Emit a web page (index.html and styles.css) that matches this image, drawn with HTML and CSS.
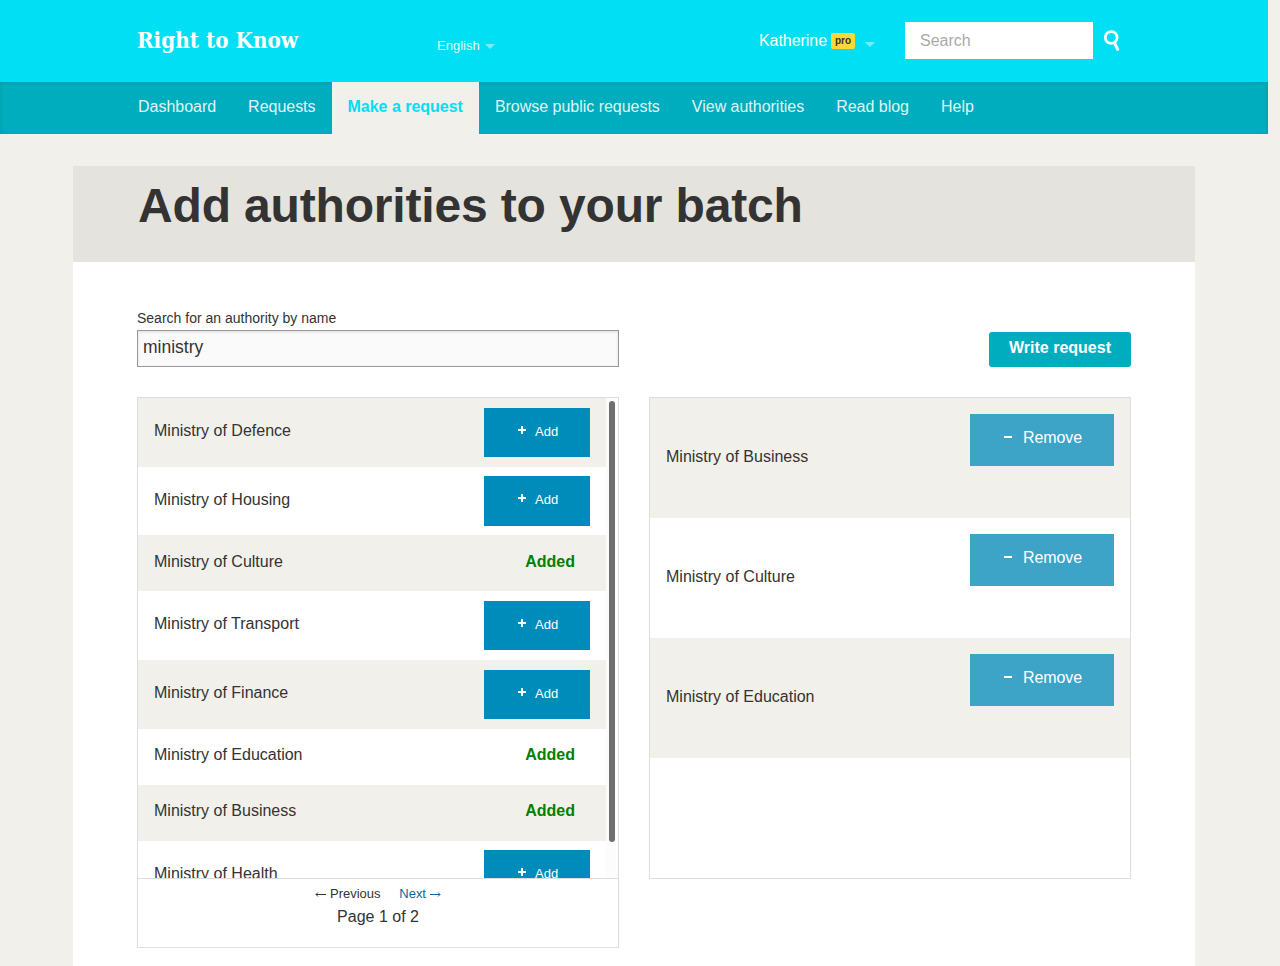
FILE: index.html
```html
<!DOCTYPE html>
<html lang="en">
<head>
<meta charset="utf-8">
<title>Add authorities to your batch - Right to Know</title>
<link rel="stylesheet" href="styles.css">
</head>
<body>
<header class="header">
  <a class="logo"><svg class="logo-art" width="170" height="40" viewBox="0 0 170 40"><text class="logo-text" x="1" y="24" textLength="161" lengthAdjust="spacingAndGlyphs">Right to Know</text></svg></a>
  <a class="locale">English <svg class="caret" width="10" height="5" viewBox="0 0 10 5"><path d="M0 0h10L5 5z"/></svg></a>
  <a class="account"><span class="account-name">Katherine</span><span class="pro">pro</span><svg class="caret" width="10" height="5" viewBox="0 0 10 5"><path d="M0 0h10L5 5z"/></svg></a>
  <form class="site-search">
    <input class="site-search-input" type="text" placeholder="Search" aria-label="Search">
    <svg class="search-icon" width="18" height="22" viewBox="0 0 18 22"><circle cx="7.2" cy="7.5" r="5.9"/><path d="M10.400 13L13.600 19.300"/></svg>
  </form>
</header>
<nav class="nav">
  <a class="nav-item">Dashboard</a>
  <a class="nav-item">Requests</a>
  <a class="nav-item nav-active">Make a request</a>
  <a class="nav-item">Browse public requests</a>
  <a class="nav-item">View authorities</a>
  <a class="nav-item">Read blog</a>
  <a class="nav-item">Help</a>
</nav>
<main class="page">
  <div class="title-bar"><h1 class="title">Add authorities to your batch</h1></div>
  <div class="tools">
    <div class="finder">
      <label class="finder-label" for="q">Search for an authority by name</label>
      <input class="finder-input" id="q" type="text" value="ministry">
    </div>
    <button class="write">Write request</button>
  </div>
  <div class="columns">
    <section class="left">
      <div class="results">
        <ul class="list">
          <li class="row"><span>Ministry of Defence</span><button class="add"><svg class="sign" width="8" height="8"><path d="M0 4h8M4 0v8"/></svg>Add</button></li>
          <li class="row"><span>Ministry of Housing</span><button class="add"><svg class="sign" width="8" height="8"><path d="M0 4h8M4 0v8"/></svg>Add</button></li>
          <li class="row row-added"><span>Ministry of Culture</span><b class="added">Added</b></li>
          <li class="row"><span>Ministry of Transport</span><button class="add"><svg class="sign" width="8" height="8"><path d="M0 4h8M4 0v8"/></svg>Add</button></li>
          <li class="row"><span>Ministry of Finance</span><button class="add"><svg class="sign" width="8" height="8"><path d="M0 4h8M4 0v8"/></svg>Add</button></li>
          <li class="row row-added"><span>Ministry of Education</span><b class="added">Added</b></li>
          <li class="row row-added"><span>Ministry of Business</span><b class="added">Added</b></li>
          <li class="row"><span>Ministry of Health</span><button class="add"><svg class="sign" width="8" height="8"><path d="M0 4h8M4 0v8"/></svg>Add</button></li>
        </ul>
        <div class="track"><div class="thumb"></div></div>
      </div>
      <div class="pager">
        <div class="pager-links"><span class="prev"><svg class="arrow" width="11" height="7" viewBox="0 0 11 7"><path d="M11 3.500H1M3 1.500L1 3.500L3 5.500"/></svg>Previous</span><a class="next">Next<svg class="arrow" width="11" height="7" viewBox="0 0 11 7"><path d="M0 3.500h10M8 1.500L10 3.500L8 5.500"/></svg></a></div>
        <div class="pager-info">Page 1 of 2</div>
      </div>
    </section>
    <section class="batch">
      <div class="pick"><span>Ministry of Business</span><button class="remove"><svg class="sign" width="8" height="8"><path d="M0 4h8"/></svg>Remove</button></div>
      <div class="pick"><span>Ministry of Culture</span><button class="remove"><svg class="sign" width="8" height="8"><path d="M0 4h8"/></svg>Remove</button></div>
      <div class="pick"><span>Ministry of Education</span><button class="remove"><svg class="sign" width="8" height="8"><path d="M0 4h8"/></svg>Remove</button></div>
    </section>
  </div>
</main>
</body>
</html>
```
FILE: styles.css
```css
* { box-sizing: border-box; }
html { height: 100%; overflow: hidden; }
body {
  margin: 0;
  height: 100%;
  overflow: hidden;
  background: #f2f0eb;
  color: #333;
  font: 16px/24px "Liberation Sans", Arial, sans-serif;
}
button, input { font-family: inherit; color: inherit; border: 0; border-radius: 0; margin: 0; outline: 0; }
.header {
  display: flex;
  align-items: flex-start;
  width: 1268px;
  height: 82px;
  padding-left: 136px;
  background: #00dff3;
  color: #fff;
}
.logo { width: 301px; padding-top: 24px; line-height: 0; }
.logo-art { overflow: visible; }
.logo-text { font: bold 23px "DejaVu Serif", serif; fill: #fff; }
.locale { width: 322px; padding-top: 34px; font-size: 13px; color: rgba(255,255,255,.9); }
.caret { fill: #fff; opacity: .45; }
.locale .caret { margin-left: 2px; vertical-align: 1px; }
.account { display: flex; width: 146px; padding-top: 29px; }
.account-name { letter-spacing: -.05px; }
.pro {
  width: 24px;
  height: 16px;
  margin: 4px 10px 0 4px;
  border-radius: 2px;
  background: #ffd836;
  color: #333;
  font-size: 10px;
  font-weight: bold;
  line-height: 15px;
  text-align: center;
}
.account .caret { margin-top: 13px; }
.site-search { display: flex; padding-top: 22px; }
.site-search-input { width: 188px; height: 37px; padding: 0 15px; background: #fff; font-size: 16px; }
.site-search-input::placeholder { color: #aaa; opacity: 1; }
.search-icon { margin: 8px 0 0 11px; fill: none; stroke: #fff; stroke-width: 2.7; }
.search-icon path { stroke-linecap: round; stroke-width: 3; }
.nav {
  display: flex;
  width: 1268px;
  height: 52px;
  padding-left: 122px;
  background: #00adbe;
  box-shadow: inset 0 1px 4px rgba(0,0,0,.12);
  letter-spacing: -.02px;
}
.nav-item { padding: 13px 16px 0; color: rgba(255,255,255,.9); white-space: nowrap; }
.nav-active { background: #f2f0eb; color: #00dff3; font-weight: bold; }
.page { width: 1122px; height: 800px; margin: 32px 0 0 73px; background: #fff; }
.title-bar { height: 96px; padding: 11px 64px 0 65px; background: #e5e3dd; }
.title { margin: 0; font-size: 48px; line-height: 58px; letter-spacing: -.16px; white-space: nowrap; }
.tools { display: flex; justify-content: space-between; align-items: flex-end; height: 105px; padding: 0 64px; }
.finder { width: 482px; }
.finder-label { display: block; font-size: 14px; line-height: 24px; }
.finder-input {
  display: block;
  width: 100%;
  height: 37px;
  padding: 0 5px 3px;
  border: 1px solid #999;
  background: #fafafa;
  box-shadow: inset 0 1px 3px rgba(0,0,0,.12);
  font-size: 17.5px;
}
.write { width: 142px; height: 35px; padding: 0 0 3px; border-radius: 3px; background: #00adbe; color: #fff; font-size: 16px; font-weight: bold; }
.columns { display: flex; align-items: flex-start; gap: 30px; padding: 30px 64px 0; }
.left { width: 482px; height: 551px; border: 1px solid #ddd; }
.results { display: flex; height: 481px; border-bottom: 1px solid #ddd; overflow: hidden; }
.list { width: 468px; margin: 0; padding: 0; list-style: none; }
.row { display: flex; justify-content: space-between; align-items: center; height: 68.66px; padding: 0 16px; }
.row:nth-child(odd) { background: #f2f0eb; }
.row > span { padding-bottom: 2.66px; }
.row-added { height: 56px; }
.row.row-added > span { padding-bottom: 3px; }
.added { padding: 0 15px 3px; color: #008000; }
.add, .remove { display: flex; align-items: center; color: #fff; }
.add { width: 106px; height: 49.33px; padding: 0 0 2px 34px; background: #008cba; font-size: 13px; }
.sign { margin: 0 9px 3px 0; stroke: #fff; stroke-width: 2; }
.track { width: 12px; background: #fcfcfc; padding: 3px 3px 0; }
.thumb { width: 6px; height: 441px; border-radius: 3px; background: #6e6e6e; }
.pager { text-align: center; padding-top: 4px; }
.pager-links { display: flex; justify-content: center; gap: 19px; font-size: 13px; line-height: 22px; letter-spacing: -.04px; }
.arrow { fill: none; stroke: currentColor; stroke-width: 1; }
.prev .arrow { margin-right: 4px; }
.next { color: #0d65a3; }
.next .arrow { margin-left: 4px; }
.pager-info { line-height: 24px; }
.batch { width: 482px; height: 482px; border: 1px solid #ddd; }
.pick { display: flex; justify-content: space-between; height: 120px; padding: 16px; }
.pick:nth-child(odd) { background: #f2f0eb; }
.pick > span { padding-top: 31px; }
.remove { width: 144px; height: 52px; padding: 0 0 4px 34px; background: #3da4c8; font-size: 16px; letter-spacing: -.1px; }
.remove .sign { margin: 0 11px 2px 0; }
```
